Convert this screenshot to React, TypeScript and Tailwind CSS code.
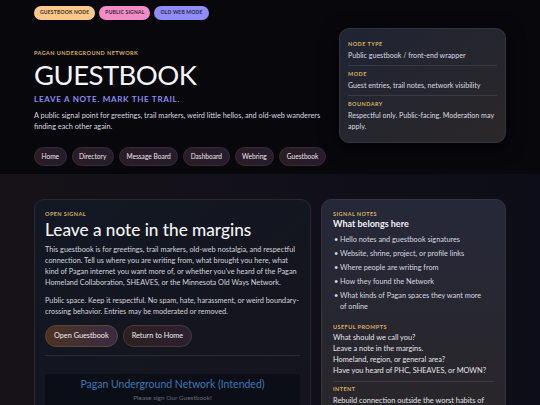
const font = { fontFamily: '"Trebuchet MS", Lato, "Noto Sans", sans-serif' }

const navLinks = ['Home', 'Directory', 'Message Board', 'Dashboard', 'Webring', 'Guestbook']

const belongs = [
  'Hello notes and guestbook signatures',
  'Website, shrine, project, or profile links',
  'Where people are writing from',
  'How they found the Network',
  'What kinds of Pagan spaces they want more of online',
]

const prompts = [
  'What should we call you?',
  'Leave a note in the margins.',
  'Homeland, region, or general area?',
  'Have you heard of PHC, SHEAVES, or MOWN?',
]

function Label({ children }: { children: React.ReactNode }) {
  return (
    <div className="text-[5.5px] font-bold uppercase tracking-[0.08em] text-[#d9b060] leading-[8px]">
      {children}
    </div>
  )
}

export default function App() {
  return (
    <div style={font} className="w-[540px] h-[405px] overflow-hidden bg-[#07070d] text-[#dcdce4]">
      {/* Hero */}
      <div className="h-[174px] bg-[#07070c]">
        <div className="w-[472px] mx-auto pt-[6px]">
          <div className="flex gap-[4px]">
            <span className="h-[14px] px-[6px] rounded-full bg-[#fdc98a] text-[#3a2a26] text-[5px] font-bold uppercase tracking-[0.04em] flex items-center">
              Guestbook Node
            </span>
            <span className="h-[14px] px-[6px] rounded-full bg-[#f28cc8] text-[#3a2230] text-[5px] font-bold uppercase tracking-[0.04em] flex items-center">
              Public Signal
            </span>
            <span className="h-[14px] px-[6px] rounded-full bg-[#908df7] text-[#262448] text-[5px] font-bold uppercase tracking-[0.04em] flex items-center">
              Old Web Mode
            </span>
          </div>

          <div className="flex justify-between items-start mt-[8px]">
            <div className="w-[295px] pt-[21px]">
              <Label>Pagan Underground Network</Label>
              <h1 className="text-[27.5px] leading-[34px] tracking-[-0.02em] text-[#f4f4f8] mt-[1px]">
                GUESTBOOK
              </h1>
              <div className="text-[8px] leading-[12px] tracking-[0.09em] text-[#8a8ef0] mt-[1px] font-bold">
                LEAVE A NOTE. MARK THE TRAIL.
              </div>
              <p className="text-[7.3px] leading-[11px] text-[#d8d8e0] mt-[5px]">
                A public signal point for greetings, trail markers, weird little hellos, and old-web wanderers finding each other again.
              </p>
              <div className="flex gap-[5px] mt-[15px] whitespace-nowrap">
                {navLinks.map((n) => (
                  <span
                    key={n}
                    className="h-[19px] px-[6.5px] rounded-full border border-[#3a2c36] bg-gradient-to-r from-[#2c1b24] to-[#241d2e] text-[6.6px] text-[#ece6ee] flex items-center"
                  >
                    {n}
                  </span>
                ))}
              </div>
            </div>

            <div className="w-[167px] rounded-[10px] border border-[#34343e] bg-gradient-to-br from-[#1f2433] to-[#2b2729] px-[8px] pt-[11px] pb-[10px] shadow-[0_4px_18px_rgba(0,0,0,0.5)]">
              <Label>Node Type</Label>
              <div className="text-[7.1px] leading-[11px] mt-[2px]">Public guestbook / front-end wrapper</div>
              <div className="h-px bg-[#3a3a44] mt-[4px] mb-[4px]"></div>
              <Label>Mode</Label>
              <div className="text-[7.1px] leading-[11px] mt-[2px]">Guest entries, trail notes, network visibility</div>
              <div className="h-px bg-[#3a3a44] mt-[4px] mb-[4px]"></div>
              <Label>Boundary</Label>
              <div className="text-[7.1px] leading-[11px] mt-[2px]">Respectful only. Public-facing. Moderation may apply.</div>
            </div>
          </div>
        </div>
      </div>

      {/* Lower */}
      <div className="h-[231px] bg-gradient-to-r from-[#161218] via-[#121019] to-[#0c0d18] pt-[25px]">
        <div className="w-[472px] mx-auto grid grid-cols-[277px_185px] gap-[10px] items-start">
          <div className="h-[240px] rounded-[10px] border border-[#2a2731] bg-gradient-to-br from-[#121824] to-[#15141c] px-[10px] pt-[10px]">
            <Label>Open Signal</Label>
            <h2 className="text-[17.2px] leading-[22px] font-medium text-[#f2f2f6] mt-[1px]">Leave a note in the margins</h2>
            <p className="text-[7.3px] leading-[11px] text-[#d4d4dc] mt-[3px]">
              This guestbook is for greetings, trail markers, old-web nostalgia, and respectful connection. Tell us where you are writing from, what brought you here, what kind of Pagan internet you want more of, or whether you&rsquo;ve heard of the Pagan Homeland Collaboration, SHEAVES, or the Minnesota Old Ways Network.
            </p>
            <p className="text-[7.3px] leading-[11px] text-[#d4d4dc] mt-[7px]">
              Public space. Keep it respectful. No spam, hate, harassment, or weird boundary-crossing behavior. Entries may be moderated or removed.
            </p>
            <div className="flex gap-[5px] mt-[8px]">
              <span className="h-[22px] px-[8px] rounded-full border border-[#5a4634] bg-gradient-to-r from-[#4b3320] to-[#3a2a42] text-[7.3px] text-[#f0ecef] flex items-center">
                Open Guestbook
              </span>
              <span className="h-[22px] px-[8px] rounded-full border border-[#4a3a36] bg-gradient-to-r from-[#2e1f20] to-[#2a2030] text-[7.3px] text-[#f0ecef] flex items-center">
                Return to Home
              </span>
            </div>
            <div className="h-px bg-[#2b2b36] mt-[8px]"></div>
            <div className="mt-[18px] h-[60px] bg-[#0b0e16] flex flex-col items-center pt-[3px]">
              <div className="text-[10.5px] leading-[14px] text-[#3c78b6]">Pagan Underground Network (Intended)</div>
              <div className="text-[6.5px] leading-[9px] text-[#676b76] mt-[2px]">Please sign Our Guestbook!</div>
            </div>
          </div>

          <div className="h-[240px] rounded-[10px] border border-[#34343e] bg-gradient-to-b from-[#252838] to-[#2a2628] px-[11px] pt-[10px]">
            <Label>Signal Notes</Label>
            <div className="text-[9px] leading-[12px] font-bold text-[#f2f2f6]">What belongs here</div>
            <ul className="mt-[4px] flex flex-col gap-[3px]">
              {belongs.map((b) => (
                <li key={b} className="flex text-[7.3px] leading-[11px] text-[#d8d8e0]">
                  <span className="w-[7px] shrink-0 pl-[1px]">&bull;</span>
                  <span className="pr-[6px]">{b}</span>
                </li>
              ))}
            </ul>
            <div className="mt-[11px]">
              <Label>Useful Prompts</Label>
            </div>
            <div className="mt-[1px] text-[7.4px] leading-[11px] text-[#e4e4ea]">
              {prompts.map((p) => (
                <div key={p}>{p}</div>
              ))}
            </div>
            <div className="h-px bg-[#3a3a44] mt-[5px]"></div>
            <div className="mt-[3px]">
              <Label>Intent</Label>
            </div>
            <div className="mt-[2px] text-[7.4px] leading-[11px] text-[#e4e4ea]">
              Rebuild connection outside the worst habits of the modern web.
            </div>
          </div>
        </div>
      </div>
    </div>
  )
}
